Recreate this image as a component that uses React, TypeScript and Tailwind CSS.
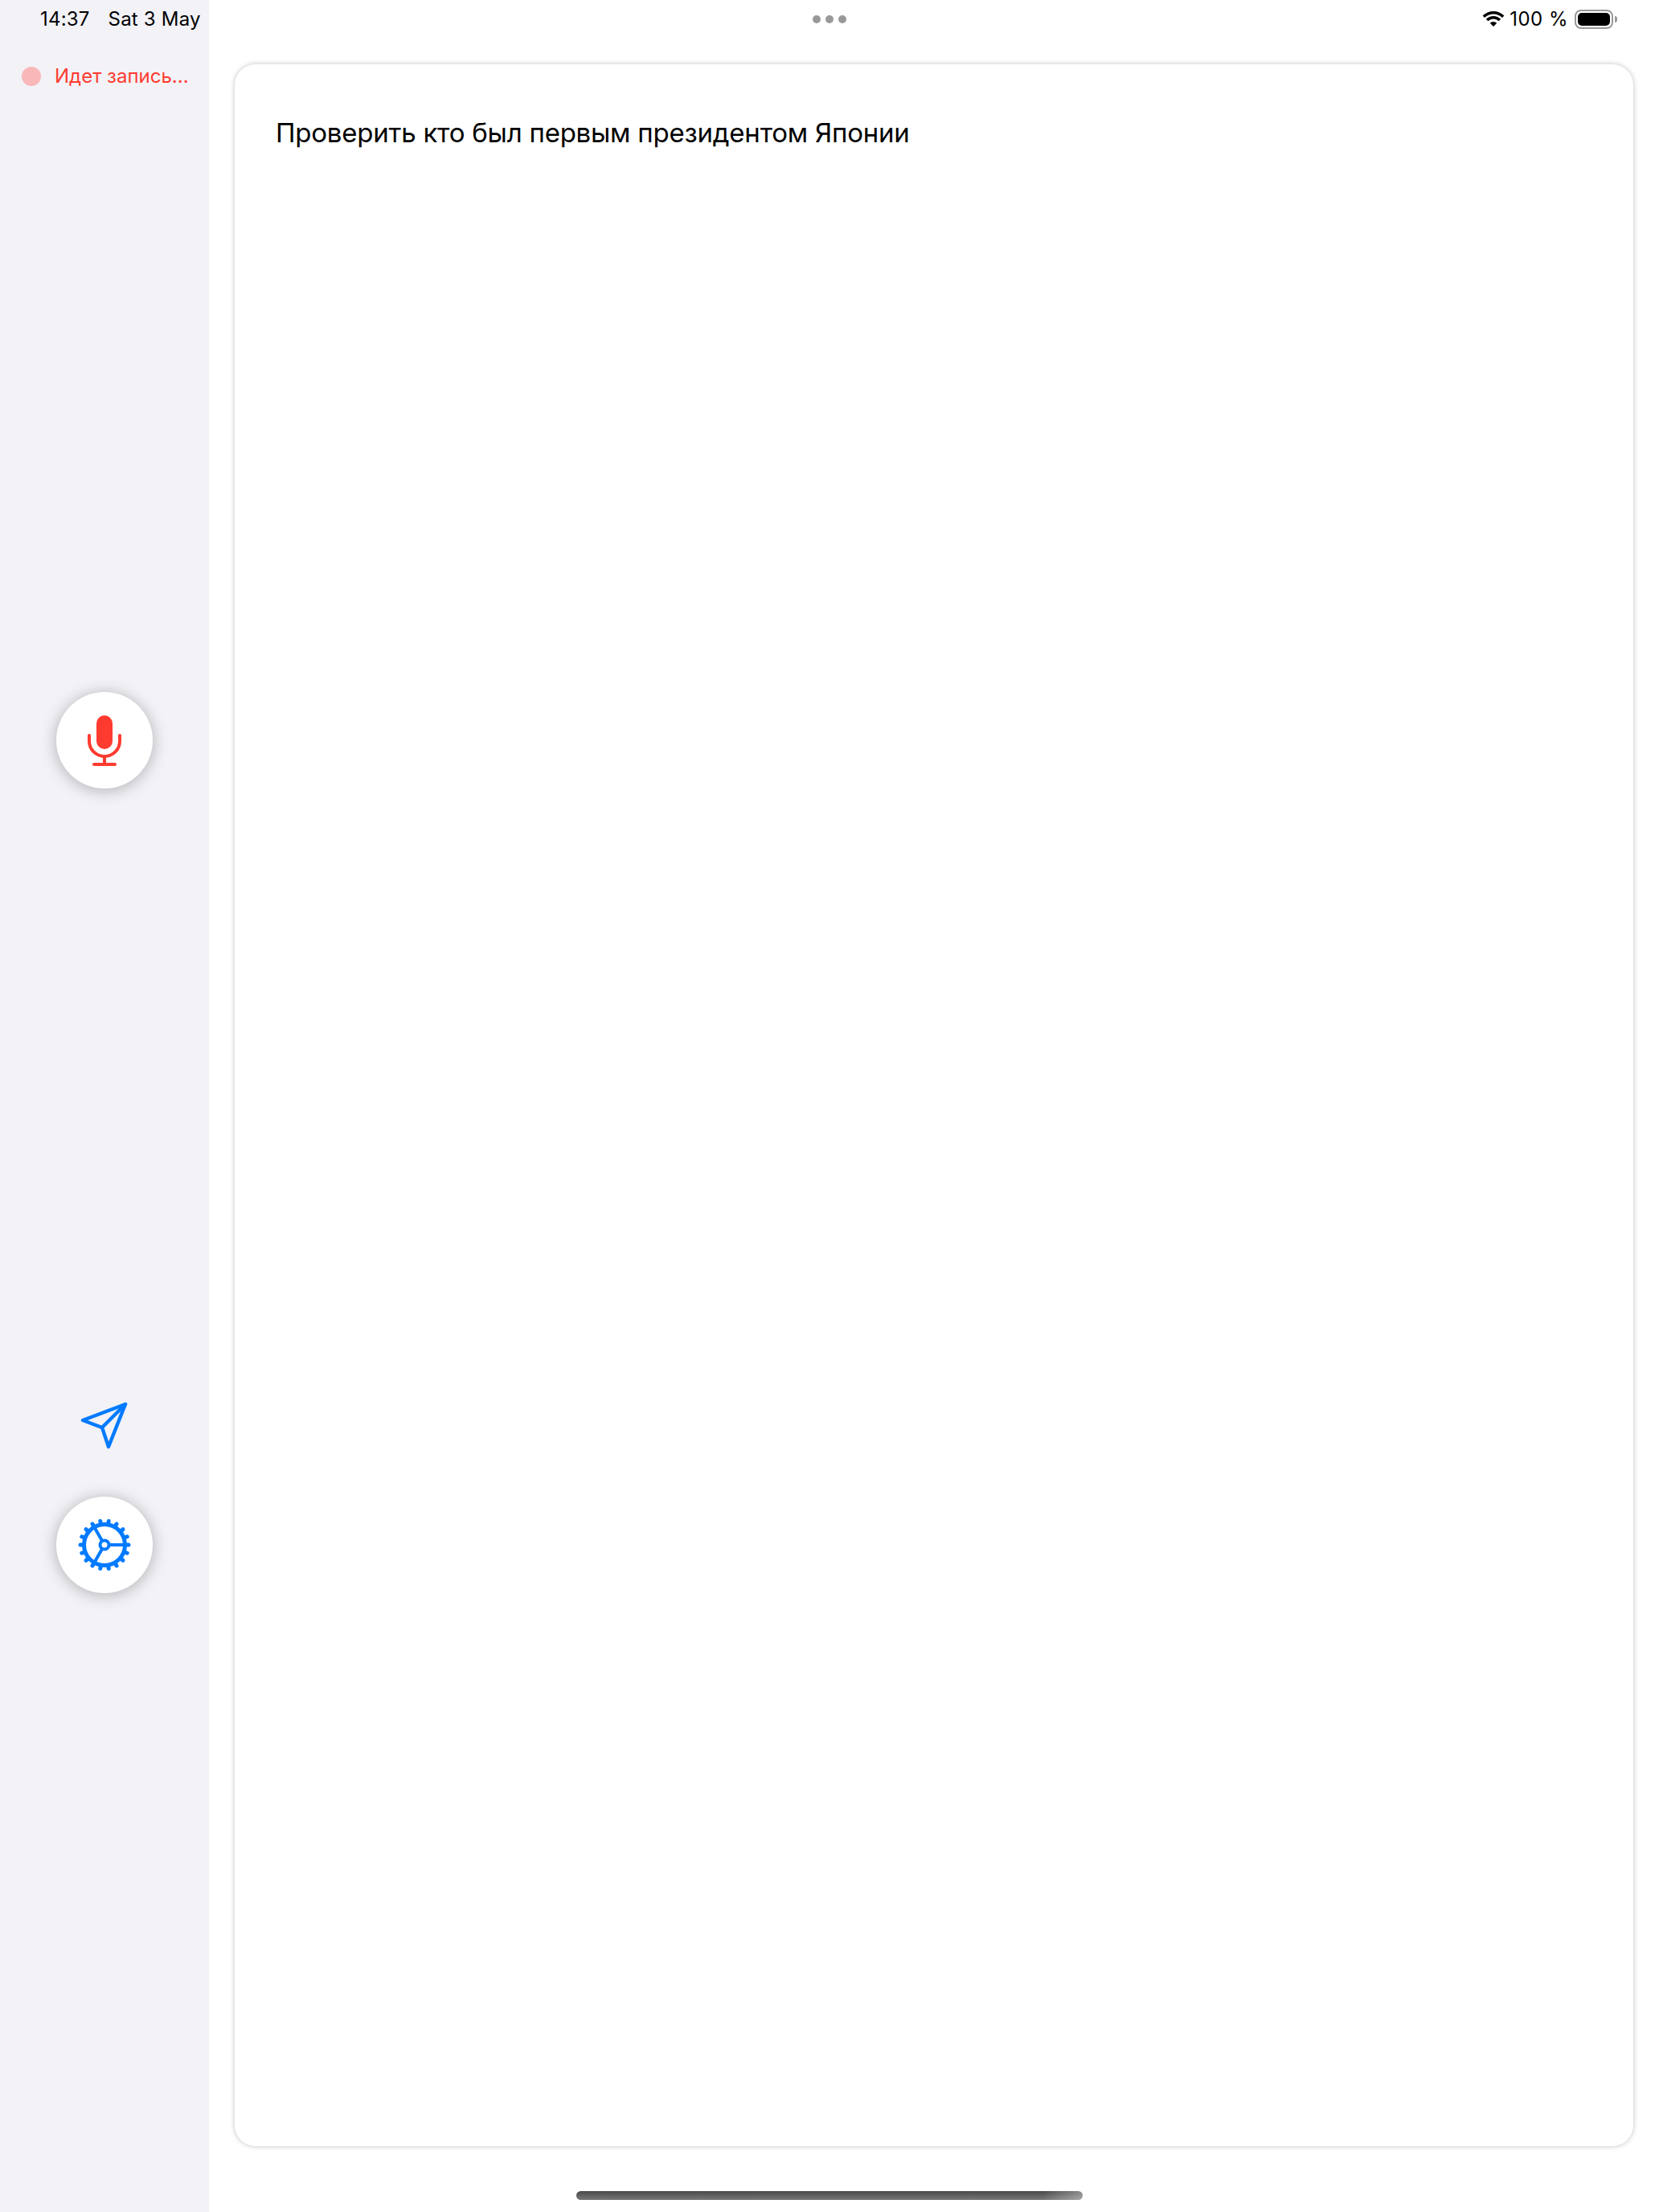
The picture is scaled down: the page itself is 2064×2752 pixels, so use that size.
const teeth = Array.from({ length: 18 }, (_, i) => i * 20);
const spokes = [0, 120, 240];

const MicIcon = () => (
  <svg width="60" height="80" viewBox="0 0 60 80" fill="none" stroke="#ff3b30" strokeWidth="4" strokeLinecap="round">
    <rect x="20" y="9" width="20" height="42" rx="10" fill="#ff3b30" stroke="none" />
    <path d="M11 34V41a19 19 0 0 0 38 0V34" />
    <path d="M30 60V69" />
    <path d="M17 70H43" />
  </svg>
);

const SendIcon = () => (
  <svg width="66" height="66" viewBox="0 0 66 66" fill="none" stroke="#007aff" strokeWidth="4.4" strokeLinejoin="round" strokeLinecap="round">
    <path d="M59 7L6 27L30 36L38 60Z" />
    <path d="M59 7L30 36" />
  </svg>
);

const GearIcon = () => (
  <svg width="70" height="70" viewBox="-35 -35 70 70" fill="none" stroke="#007aff" strokeLinecap="round">
    {teeth.map((a) => (
      <line key={a} x1="26" y1="0" x2="30" y2="0" strokeWidth="5" transform={`rotate(${a})`} />
    ))}
    <circle r="25.5" strokeWidth="5" />
    <circle r="5.5" strokeWidth="4" />
    {spokes.map((a) => (
      <line key={a} x1="7" y1="0" x2="25" y2="0" strokeWidth="4" transform={`rotate(${a})`} />
    ))}
  </svg>
);

const WifiIcon = () => (
  <svg width="28" height="20" viewBox="0 0 28 20" fill="none" stroke="#000000" strokeWidth="3.6">
    <path d="M1.84 6.84A17.2 17.2 0 0 1 26.16 6.84" />
    <path d="M6.08 11.08A11.2 11.2 0 0 1 21.92 11.08" />
    <path d="M14 19L9.76 14.76A6 6 0 0 1 18.24 14.76Z" fill="#000000" stroke="none" />
  </svg>
);

const App = () => {
  return (
    <div className="relative flex h-[2752px] w-[2064px] overflow-hidden bg-white font-['Inter','Noto_Sans',sans-serif] text-black">
      <aside className="flex w-[260px] flex-none flex-col items-center bg-[#f2f2f7]">
        <div className="flex h-[48px] w-full items-center gap-[23px] pl-[50px] text-[24px] tracking-[0.2px]">
          <span>14:37</span>
          <span>Sat 3 May</span>
        </div>
        <div className="mt-[23px] flex h-[48px] w-full items-center gap-[17px] pl-[27px] text-[24px] text-[#ff3b30]">
          <span className="h-[24px] w-[24px] rounded-full bg-[#f8b8b9]" />
          <span>Идет запись...</span>
        </div>
        <button className="mt-[742px] flex h-[120px] w-[120px] items-center justify-center rounded-full bg-white shadow-[0_2px_20px_rgba(0,0,0,0.28)]">
          <MicIcon />
        </button>
        <button className="mt-[759px] flex h-[66px] w-[66px] items-center justify-center">
          <SendIcon />
        </button>
        <button className="mt-[56px] flex h-[120px] w-[120px] items-center justify-center rounded-full bg-white shadow-[0_2px_20px_rgba(0,0,0,0.28)]">
          <GearIcon />
        </button>
      </aside>
      <main className="flex flex-1 flex-col">
        <div className="relative flex h-[48px] items-center justify-end pr-[52px] text-[24px]">
          <div className="absolute left-[751px] top-[19px] flex gap-[6px]">
            <span className="h-[10px] w-[10px] rounded-full bg-[#999999]" />
            <span className="h-[10px] w-[10px] rounded-full bg-[#999999]" />
            <span className="h-[10px] w-[10px] rounded-full bg-[#999999]" />
          </div>
          <div className="mr-[6px]">
            <WifiIcon />
          </div>
          <span className="mr-[8px] tracking-[0.5px]">100 %</span>
          <div className="flex items-center">
            <div className="flex h-[24px] w-[48px] rounded-[8px] border-2 border-[#999999] p-[2px]">
              <div className="flex-1 rounded-[5px] bg-black" />
            </div>
            <div className="ml-[2px] h-[8px] w-[3px] rounded-r-full bg-[#999999]" />
          </div>
        </div>
        <section className="ml-[32px] mr-[32px] mt-[32px] h-[2590px] rounded-[26px] bg-white px-[51px] pt-[64px] shadow-[0_0_6px_rgba(0,0,0,0.25)]">
          <p className="text-[33px] leading-[42px] tracking-[-0.23px]">Проверить кто был первым президентом Японии</p>
        </section>
      </main>
      <div className="absolute bottom-[15px] left-[717px] h-[11px] w-[630px] rounded-full bg-[linear-gradient(to_right,transparent_92%,rgba(255,255,255,0.35)),linear-gradient(to_bottom,#484848,#787878)]" />
    </div>
  );
};

export default App;
